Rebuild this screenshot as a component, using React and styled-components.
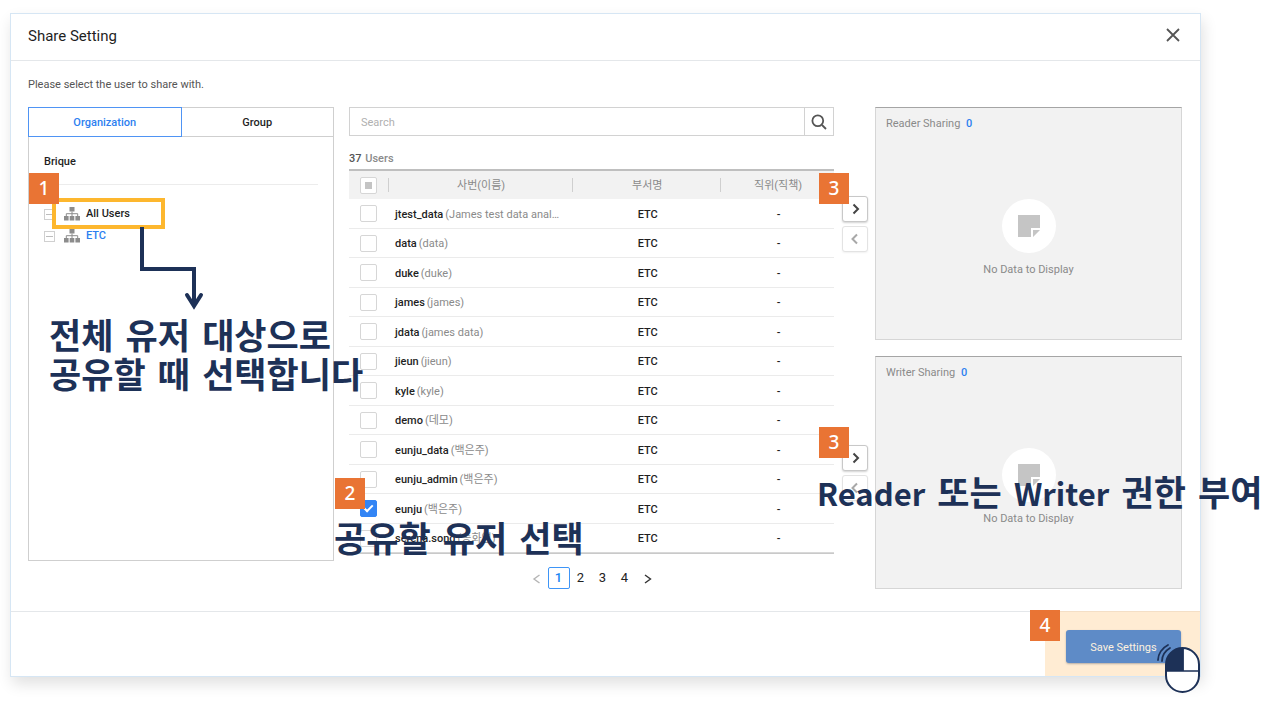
import React from "react";
import styled, { createGlobalStyle, css } from "styled-components";

const GlobalStyle = createGlobalStyle`
  *, *::before, *::after { box-sizing: border-box; }
  body {
    margin: 0;
    background: #fff;
    color: #1f1f1f;
    font: 500 11px/16px Roboto, "Noto Sans CJK KR", sans-serif;
    overflow-x: hidden;
  }
  button, input { font: inherit; color: inherit; margin: 0; padding: 0; }
  button { background: none; border: 0; cursor: pointer; }
  h1, h2, p { margin: 0; font: inherit; }
`;

const navy = "#1d3157";
const blue = "#2d7ff0";

const Stage = styled.main`
  padding: 13px 76px 27px 10px;
`;

const Dialog = styled.section`
  border: 1px solid #d6e6f4;
  box-shadow: 2px 7px 14px rgba(0, 0, 0, 0.12);
  background: #fff;
`;

const Header = styled.header`
  display: flex;
  align-items: center;
  justify-content: space-between;
  height: 47px;
  padding: 0 19px 3px 17px;
  border-bottom: 1px solid #e4e7ea;
`;

const Title = styled.h1`
  font-size: 15px;
  font-weight: 400;
  line-height: 20px;
`;

const CloseButton = styled.button`
  display: flex;
`;

const Body = styled.div`
  padding: 16px 18px 22px 17px;
`;

const Intro = styled.p`
  color: #555;
  font-weight: 400;
  margin-bottom: 14px;
`;

const Columns = styled.div`
  display: grid;
  grid-template-columns: minmax(0, 313fr) minmax(0, 485fr) minmax(0, 340fr);
  column-gap: 8px;
  align-items: start;
`;

/* organization panel */
const OrgPanel = styled.section`
  position: relative;
  margin-right: 7px;
  height: 454px;
  border: 1px solid #cfcfcf;
`;

const Tabs = styled.div`
  display: flex;
  margin: -1px;
`;

const Tab = styled.button`
  flex: 1;
  height: 30px;
  padding-top: 2px;
  font-weight: 500;
  border: 1px solid ${(p) => (p.$active ? "#4f94f4" : "#cfcfcf")};
  border-left-width: ${(p) => (p.$active ? "1px" : "0")};
  color: ${(p) => (p.$active ? blue : "#1f1f1f")};
`;

const OrgName = styled.h2`
  margin: 18px 15px 0;
  padding-bottom: 14px;
  border-bottom: 1px solid #ececec;
`;

const Tree = styled.ul`
  list-style: none;
  margin: 18px 15px 0;
  padding: 0;
`;

const TreeItem = styled.li`
  display: flex;
  align-items: center;
  height: 22px;
  color: ${(p) => (p.$selected ? blue : "#1f1f1f")};
`;

const Toggle = styled.button`
  position: relative;
  width: 11px;
  height: 11px;
  border: 1px solid #d0d0d0;
  margin-right: 9px;
  &::after {
    content: "";
    position: absolute;
    inset: 4px 1px;
    background: #bdbdbd;
  }
`;

const TreeLink = styled.button`
  display: flex;
  align-items: center;
  gap: 6px;
  font-weight: 500;
`;

/* user list */
const Users = styled.section`
  position: relative;
`;

const SearchBox = styled.form`
  display: flex;
  height: 29px;
  border: 1px solid #d2d2d2;
`;

const SearchInput = styled.input`
  flex: 1;
  min-width: 0;
  border: 0;
  padding: 2px 11px 0;
  font-weight: 400;
  outline: none;
  &::placeholder { color: #b0b0b0; opacity: 1; }
`;

const SearchButton = styled.button`
  display: flex;
  align-items: center;
  justify-content: center;
  width: 29px;
  border-left: 1px solid #d2d2d2;
`;

const Count = styled.p`
  margin: 15px 0 2px;
  color: #8a8a8a;
  strong { color: #555; font-weight: 500; margin-right: 1px; }
`;

const Table = styled.table`
  width: 100%;
  table-layout: fixed;
  border-collapse: separate;
  border-spacing: 0;
  border-top: 2px solid #bfbfbf;
  border-bottom: 1px solid #c9c9c9;
`;

const Col = styled.col`
  width: ${(p) => p.$w};
`;

const HeadCell = styled.th`
  position: relative;
  height: 28px;
  padding: ${(p) => (p.$divided ? "2px 0 0 2px" : "0")};
  background: #f2f2f2;
  color: #8a8a8a;
  font-weight: 400;
  text-align: center;
  ${(p) => p.$divided && css`
    &::before {
      content: "";
      position: absolute;
      left: 0;
      top: 7px;
      height: 14px;
      border-left: 1px solid #cfcfcf;
    }
  `}
`;

const Row = styled.tr`
  height: 30px;
  &:nth-child(even) { height: 29px; }
`;

const Cell = styled.td`
  padding: 2px 0 0 ${(p) => (p.$name ? "7px" : "3px")};
  border-bottom: 1px solid #ebebeb;
  text-align: ${(p) => (p.$name ? "left" : "center")};
  white-space: nowrap;
  ${Row}:last-child & { border-bottom-color: #d8d8d8; }
`;

const CheckCell = styled(Cell)`
  padding: 0;
`;

const Alias = styled.span`
  color: #8a8a8a;
  font-weight: 400;
  margin-left: 2px;
`;

const checkMark = css`
  &::after {
    content: "";
    width: 9px;
    height: 5px;
    margin-top: -3px;
    border: solid #fff;
    border-width: 0 0 2px 2px;
    rotate: -45deg;
  }
`;

const someMark = css`
  &::after {
    content: "";
    width: 7px;
    height: 7px;
    background: #c4c4c4;
  }
`;

const Check = styled.input`
  appearance: none;
  display: flex;
  align-items: center;
  justify-content: center;
  width: 17px;
  height: 17px;
  margin: 0 auto;
  background: #fff;
  border: 1px solid #d6d6d6;
  border-radius: 2px;
  &:checked {
    background: #3385f5;
    border-color: #3385f5;
  }
  ${(p) => p.$some && someMark}
  ${(p) => p.checked && checkMark}
`;

const Pager = styled.nav`
  display: flex;
  align-items: center;
  justify-content: center;
  margin-top: 13px;
`;

const PageButton = styled.button`
  display: flex;
  align-items: center;
  justify-content: center;
  width: 22px;
  height: 22px;
  font-size: 13px;
  font-weight: 400;
  border: 1px solid ${(p) => (p.$current ? "#3e95f7" : "transparent")};
  border-radius: 2px;
  color: ${(p) => (p.$current ? "#1c86f2" : "#222")};
  ${(p) => p.$current && "font-weight: 500;"}
`;

const StepButton = styled(PageButton)`
  padding-top: 2px;
`;

/* sharing targets */
const Targets = styled.div`
  display: grid;
  row-gap: 16px;
`;

const Target = styled.section`
  position: relative;
  display: flex;
  align-items: center;
  gap: 7px;
`;

const Moves = styled.div`
  display: grid;
  row-gap: 4px;
`;

const MoveButton = styled.button`
  display: flex;
  align-items: center;
  justify-content: center;
  width: 26px;
  height: 26px;
  background: #fff;
  border: 1px solid ${(p) => (p.disabled ? "#e3e3e3" : "#c8c8c8")};
  border-radius: 3px;
  box-shadow: 0 1px 2px rgba(0, 0, 0, ${(p) => (p.disabled ? 0.06 : 0.18)});
`;

const TargetPanel = styled.div`
  flex: 1;
  display: flex;
  flex-direction: column;
  height: 233px;
  padding: 8px 10px;
  background: #f2f2f2;
  border: 1px solid #d6d6d6;
  border-top-color: #a5a5a5;
`;

const TargetTitle = styled.h2`
  color: #8a8a8a;
  font-weight: 400;
  span { color: ${blue}; font-weight: 500; margin-left: 3px; }
`;

const Empty = styled.div`
  display: flex;
  flex-direction: column;
  align-items: center;
  gap: 9px;
  margin-top: 67px;
  color: #8a8a8a;
  font-weight: 400;
`;

const EmptyDisc = styled.div`
  display: flex;
  align-items: center;
  justify-content: center;
  width: 54px;
  height: 54px;
  border-radius: 50%;
  background: #fff;
`;

/* footer */
const Footer = styled.footer`
  display: flex;
  justify-content: flex-end;
  border-top: 1px solid #e4e7ea;
`;

const SaveArea = styled.div`
  position: relative;
  padding: 18px 19px 13px 21px;
  margin-top: -1px;
  background: #ffecd3;
  border-top: 1px solid #f4dfc6;
`;

const SaveButton = styled.button`
  display: block;
  width: 115px;
  height: 33px;
  padding-top: 2px;
  background: #5e8bc7;
  border-radius: 3px;
  box-shadow: 0 1px 2px rgba(70, 80, 100, 0.4);
  color: #fdf1df;
  font-weight: 400;
`;

/* guide marks drawn over the dialog */
const Badge = styled.span`
  position: absolute;
  z-index: 2;
  left: ${(p) => p.$x}px;
  top: ${(p) => p.$y}px;
  display: flex;
  align-items: center;
  justify-content: center;
  width: 30px;
  height: 31px;
  background: #e97434;
  color: #fff;
  font: 500 19px/31px "Noto Sans", sans-serif;
`;

const Frame = styled.span`
  position: absolute;
  z-index: 1;
  left: 23px;
  top: 90px;
  width: 113px;
  height: 31px;
  border: 4px solid #fdb72e;
  pointer-events: none;
`;

const Arrow = styled.svg`
  position: absolute;
  z-index: 1;
  left: 107px;
  top: 119px;
`;

/* the first family supplies the word spaces, the second the Hangul */
const Caption = styled.p`
  position: absolute;
  z-index: 3;
  left: ${(p) => p.$x}px;
  top: ${(p) => p.$y}px;
  color: ${navy};
  font: 700 35px/39px "DejaVu Sans", "Noto Sans CJK KR", sans-serif;
  white-space: nowrap;
  pointer-events: none;
`;

const Latin = styled.span`
  font-family: "Noto Sans CJK KR", sans-serif;
  font-size: 31px;
  line-height: 1;
`;

const Mouse = styled.svg`
  position: absolute;
  z-index: 2;
  right: -1px;
  bottom: -18px;
`;

const users = [
  ["jtest_data", "(James test data anal…"],
  ["data", "(data)"],
  ["duke", "(duke)"],
  ["james", "(james)"],
  ["jdata", "(james data)"],
  ["jieun", "(jieun)"],
  ["kyle", "(kyle)"],
  ["demo", "(데모)"],
  ["eunju_data", "(백은주)"],
  ["eunju_admin", "(백은주)"],
  ["eunju", "(백은주)", true],
  ["serena.song", "(송화연)"],
];

const OrgIcon = () => (
  <svg width="16" height="14" viewBox="0 0 16 14" fill="#8c8c8c" aria-hidden="true">
    <path d="M5.5 0h5v4.5h-5zM0 9h4.6v4.5H0zM5.7 9h4.6v4.5H5.7zM11.4 9H16v4.5h-4.6z" />
    <path d="M2.3 9V6.7h11.4V9M8 4.5V9" fill="none" stroke="#8c8c8c" />
  </svg>
);

const Chevron = ({ left, color }) => (
  <svg width="12" height="12" viewBox="0 0 12 12" fill="none" stroke={color} strokeWidth="2" aria-hidden="true">
    <path d={left ? "M8 1.5 3.5 6 8 10.5" : "M4.5 1.5 9 6l-4.5 4.5"} />
  </svg>
);

const PageStep = ({ left, color }) => (
  <svg width="10" height="10" viewBox="0 0 10 10" fill="none" stroke={color} strokeWidth="1.4" aria-hidden="true">
    <path d={left ? "M7.5 1 2 5l5.5 4" : "M3 1l5.5 4L3 9"} />
  </svg>
);

const NoteIcon = () => (
  <svg width="22" height="22" viewBox="0 0 22 22" fill="#c5c5c5" aria-hidden="true">
    <path d="M0 0h22v13h-9v9H0zM15 15h7l-7 7z" />
  </svg>
);

function ShareTarget({ title, children }) {
  return (
    <Target>
      <Moves>
        <MoveButton type="button" aria-label={`Add to ${title}`}>
          <Chevron color="#444" />
        </MoveButton>
        <MoveButton type="button" disabled aria-label={`Remove from ${title}`}>
          <Chevron left color="#a8a8a8" />
        </MoveButton>
      </Moves>
      <TargetPanel>
        <TargetTitle>
          {title} <span>0</span>
        </TargetTitle>
        <Empty>
          <EmptyDisc>
            <NoteIcon />
          </EmptyDisc>
          No Data to Display
        </Empty>
      </TargetPanel>
      {children}
    </Target>
  );
}

function UserTable() {
  const [picked, setPicked] = React.useState(() => users.map((u) => Boolean(u[2])));
  const toggle = (i) => setPicked(picked.map((v, n) => (n === i ? !v : v)));
  return (
    <Table>
      <colgroup>
        <Col $w="39px" />
        <Col $w="38%" />
        <Col $w="30.5%" />
        <Col />
      </colgroup>
      <thead>
        <tr>
          <HeadCell>
            <Check type="checkbox" $some aria-label="Select all users" />
          </HeadCell>
          <HeadCell $divided>사번(이름)</HeadCell>
          <HeadCell $divided>부서명</HeadCell>
          <HeadCell $divided>직위(직책)</HeadCell>
        </tr>
      </thead>
      <tbody>
        {users.map(([id, alias], i) => (
          <Row key={id}>
            <CheckCell>
              <Check type="checkbox" id={`user-${i}`} checked={picked[i]} onChange={() => toggle(i)} />
            </CheckCell>
            <Cell $name>
              <label htmlFor={`user-${i}`}>
                {id}
                <Alias>{alias}</Alias>
              </label>
            </Cell>
            <Cell>ETC</Cell>
            <Cell>-</Cell>
          </Row>
        ))}
      </tbody>
    </Table>
  );
}

export default function App() {
  return (
    <Stage>
      <GlobalStyle />
      <Dialog role="dialog" aria-label="Share Setting">
        <Header>
          <Title>Share Setting</Title>
          <CloseButton type="button" aria-label="Close">
            <svg width="16" height="16" viewBox="0 0 16 16" stroke="#555" strokeWidth="1.8">
              <path d="M2 1l12 12M14 1 2 13" />
            </svg>
          </CloseButton>
        </Header>
        <Body>
          <Intro>Please select the user to share with.</Intro>
          <Columns>
            <OrgPanel>
              <Tabs>
                <Tab type="button" $active>Organization</Tab>
                <Tab type="button">Group</Tab>
              </Tabs>
              <OrgName>Brique</OrgName>
              <Tree>
                <TreeItem>
                  <Toggle type="button" aria-label="Collapse All Users" />
                  <TreeLink type="button"><OrgIcon />All Users</TreeLink>
                </TreeItem>
                <TreeItem $selected>
                  <Toggle type="button" aria-label="Collapse ETC" />
                  <TreeLink type="button"><OrgIcon />ETC</TreeLink>
                </TreeItem>
              </Tree>
              <Frame />
              <Badge $x={0} $y={65}>1</Badge>
              <Arrow width="70" height="84" viewBox="0 0 70 84" fill="none" stroke={navy} strokeWidth="4" aria-hidden="true">
                <path d="M6 0v42h52v34" />
                <path d="M51 68l7 11 7-11" strokeLinecap="round" />
              </Arrow>
              <Caption $x={20} $y={210}>
                전체 유저 대상으로
                <br />
                공유할 때 선택합니다
              </Caption>
            </OrgPanel>

            <Users>
              <SearchBox onSubmit={(e) => e.preventDefault()}>
                <SearchInput type="text" placeholder="Search" aria-label="Search" />
                <SearchButton aria-label="Search users">
                  <svg width="16" height="16" viewBox="0 0 16 16" fill="none" stroke="#555" strokeWidth="1.8">
                    <circle cx="6.8" cy="6.8" r="5.4" />
                    <path d="M11 11l4 4" />
                  </svg>
                </SearchButton>
              </SearchBox>
              <Count><strong>37</strong> Users</Count>
              <UserTable />
              <Pager aria-label="Pages">
                <StepButton type="button" aria-label="Previous page"><PageStep left color="#b5b5b5" /></StepButton>
                <PageButton type="button" $current>1</PageButton>
                <PageButton type="button">2</PageButton>
                <PageButton type="button">3</PageButton>
                <PageButton type="button">4</PageButton>
                <StepButton type="button" aria-label="Next page"><PageStep color="#333" /></StepButton>
              </Pager>
              <Badge $x={-14} $y={371}>2</Badge>
              <Caption $x={-15} $y={414}>공유할 유저 선택</Caption>
            </Users>

            <Targets>
              <ShareTarget title="Reader Sharing">
                <Badge $x={-23} $y={66}>3</Badge>
              </ShareTarget>
              <ShareTarget title="Writer Sharing">
                <Badge $x={-23} $y={71}>3</Badge>
                <Caption $x={-25} $y={119}>
                  <Latin>Reader</Latin> 또는 <Latin>Writer</Latin> 권한 부여
                </Caption>
              </ShareTarget>
            </Targets>
          </Columns>
        </Body>
        <Footer>
          <SaveArea>
            <SaveButton type="button">Save Settings</SaveButton>
            <Badge $x={-15} $y={-2}>4</Badge>
            <Mouse width="45" height="51" viewBox="0 0 45 51" aria-hidden="true">
              <rect x="10" y="5" width="33" height="44" rx="16.5" fill="#fff" stroke={navy} strokeWidth="2" />
              <path d="M10 28v-6A16.5 16.5 0 0 1 26.5 5h1v23z" fill={navy} />
              <path d="M10 28h33M27 5v23" stroke={navy} strokeWidth="1.6" />
              <path d="M2 17c0-6 4-12 10-15M6 18c0-5 3-10 8-13" fill="none" stroke={navy} strokeWidth="1.8" strokeLinecap="round" />
            </Mouse>
          </SaveArea>
        </Footer>
      </Dialog>
    </Stage>
  );
}
